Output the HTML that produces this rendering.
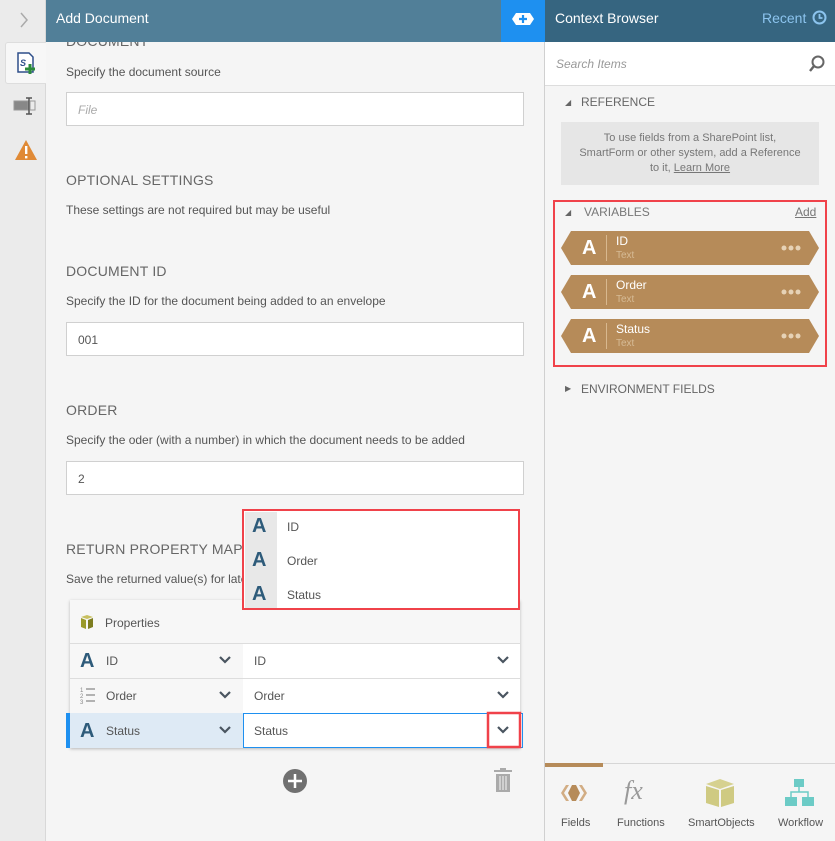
<!DOCTYPE html>
<html><head><style>
*{box-sizing:border-box;margin:0;padding:0}
body{width:835px;height:841px;position:relative;overflow:hidden;font-family:"Liberation Sans",sans-serif;background:#f5f5f5;color:#555}
.a{position:absolute}
.lbl{font-size:14px;color:#666;letter-spacing:.2px}
.desc{font-size:12px;color:#555}
.inp{background:#fff;border:1px solid #d0d0d0;height:34px;font-size:12px;padding:10px 11px;color:#555}
.bigA{font-weight:bold;color:#2e5b7a;font-size:20px}
.var{left:561px;width:258px;height:34px;background:#b68b59;clip-path:polygon(10px 0,248px 0,258px 17px,248px 34px,10px 34px,0 17px)}
</style></head><body>
<div class="a" style="left:0;top:0;width:46px;height:841px;background:#ebebeb;border-right:1px solid #d8d8d8"></div>
<svg class="a" style="left:18px;top:11px" width="12" height="18"><path d="M3 2l6 7-6 7" fill="none" stroke="#aaa" stroke-width="1.5"/></svg>
<div class="a" style="left:5px;top:42px;width:41px;height:42px;background:#f7f7f7;border:1px solid #ddd;border-right:none;border-radius:3px 0 0 3px"></div>
<svg class="a" style="left:15px;top:51px" width="24" height="24"><path d="M3 2h11l4 4v15H3z" fill="#fff" stroke="#2e4f8a" stroke-width="1.5"/><text x="5" y="15" font-size="9" fill="#2e4f8a" font-style="italic" font-weight="bold">S</text><path d="M15 13v10M10 18h10" stroke="#2a8a3a" stroke-width="3"/></svg>
<svg class="a" style="left:13px;top:96px" width="24" height="20"><rect x="1" y="5" width="14" height="9" fill="#888" stroke="#999"/><path d="M16 2v16M13 2h6M13 18h6" stroke="#555" stroke-width="1.5"/><rect x="17" y="5" width="5" height="9" fill="none" stroke="#999"/></svg>
<svg class="a" style="left:14px;top:139px" width="24" height="22"><path d="M12 1L23 21H1z" fill="#e08a36"/><rect x="11" y="7" width="2.4" height="8" fill="#fff"/><rect x="11" y="17" width="2.4" height="2.4" fill="#fff"/></svg>
<div class="a" style="left:46px;top:0;width:455px;height:42px;background:#517f98;color:#fff;font-size:14px;padding:10px 10px">Add Document</div>
<div class="a" style="left:501px;top:0;width:44px;height:42px;background:#1e90f0"></div>
<svg class="a" style="left:511px;top:11px" width="24" height="16"><path d="M5 2h14l4 6-4 6H5L1 8z" fill="#fff"/><path d="M12 4v8M8 8h8" stroke="#1e90f0" stroke-width="2.2"/></svg>
<div class="a" style="left:545px;top:0;width:290px;height:42px;background:#366580;color:#fff;font-size:14px;padding:10px 10px">Context Browser</div>
<div class="a" style="left:762px;top:10px;color:#8cc4ee;font-size:14px">Recent</div>
<svg class="a" style="left:812px;top:10px" width="15" height="15"><circle cx="7.5" cy="7.5" r="6" fill="none" stroke="#8cc4ee" stroke-width="2"/><path d="M7.5 4v4h3" stroke="#8cc4ee" stroke-width="1.8" fill="none"/></svg>
<div class="a lbl" style="left:66px;top:33px;clip-path:inset(9px 0 0 0)">DOCUMENT</div>
<div class="a desc" style="left:66px;top:65px">Specify the document source</div>
<div class="a inp" style="left:66px;top:92px;width:458px;color:#aaa;font-style:italic">File</div>
<div class="a lbl" style="left:66px;top:172px">OPTIONAL SETTINGS</div>
<div class="a desc" style="left:66px;top:203px">These settings are not required but may be useful</div>
<div class="a lbl" style="left:66px;top:263px">DOCUMENT ID</div>
<div class="a desc" style="left:66px;top:294px">Specify the ID for the document being added to an envelope</div>
<div class="a inp" style="left:66px;top:322px;width:458px">001</div>
<div class="a lbl" style="left:66px;top:402px">ORDER</div>
<div class="a desc" style="left:66px;top:433px">Specify the oder (with a number) in which the document needs to be added</div>
<div class="a inp" style="left:66px;top:461px;width:458px">2</div>
<div class="a lbl" style="left:66px;top:541px">RETURN PROPERTY MAPPING</div>
<div class="a desc" style="left:66px;top:572px">Save the returned value(s) for later use</div>
<div class="a" style="left:70px;top:600px;width:450px;height:148px;background:#f7f7f7;box-shadow:0 1px 3px rgba(0,0,0,.25)"></div>
<svg class="a" style="left:80px;top:614px" width="14" height="16"><path d="M1 3l6-2 6 2-6 2z" fill="#c8c060"/><path d="M1 4l5 2v9l-5-2z" fill="#9a9a2a"/><path d="M13 4l-5 2v9l5-2z" fill="#7d7d20"/></svg>
<div class="a desc" style="left:105px;top:616px">Properties</div>
<div class="a" style="left:70px;top:643px;width:450px;height:1px;background:#ddd"></div>
<div class="a" style="left:70px;top:678px;width:450px;height:1px;background:#ddd"></div>
<div class="a" style="left:243px;top:644px;width:277px;height:34px;background:#fff"></div>
<div class="a" style="left:243px;top:679px;width:277px;height:34px;background:#fff"></div>
<div class="a" style="left:66px;top:713px;width:177px;height:35px;background:#deeaf5;border-left:4px solid #1e90f0"></div>
<div class="a" style="left:243px;top:713px;width:280px;height:35px;background:#fff;border:1px solid #1e90f0"></div>
<div class="a bigA" style="left:80px;top:650px">A</div>
<svg class="a" style="left:80px;top:686px" width="16" height="18"><text x="0" y="6" font-size="6" fill="#888">1</text><text x="0" y="12" font-size="6" fill="#888">2</text><text x="0" y="18" font-size="6" fill="#888">3</text><path d="M6 3h9M6 9h9M6 15h9" stroke="#888" stroke-width="1.3"/></svg>
<div class="a bigA" style="left:80px;top:720px">A</div>
<div class="a desc" style="left:106px;top:654px">ID</div>
<div class="a desc" style="left:106px;top:689px">Order</div>
<div class="a desc" style="left:106px;top:724px">Status</div>
<div class="a desc" style="left:254px;top:654px">ID</div>
<div class="a desc" style="left:254px;top:689px">Order</div>
<div class="a desc" style="left:254px;top:724px">Status</div>
<svg class="a" style="left:0;top:0" width="835" height="841"><g fill="none" stroke="#4a5560" stroke-width="2.2"><path d="M220 657l5 5 5-5M220 692l5 5 5-5M220 727l5 5 5-5M498 657l5 5 5-5M498 692l5 5 5-5M498 727l5 5 5-5"/></g>
<rect x="488" y="713" width="32" height="34" fill="none" stroke="#f0424a" stroke-width="2.5"/>
<circle cx="295" cy="781" r="12" fill="#707070"/><path d="M295 774v14M288 781h14" stroke="#fff" stroke-width="2.5"/>
<g fill="#aaa"><rect x="494" y="770" width="18" height="2"/><rect x="500" y="768" width="6" height="2"/><path d="M496 774h14v18h-14z"/></g><path d="M500 776v14M503 776v14M506 776v14" stroke="#f5f5f5" stroke-width="1"/>
</svg>
<div class="a" style="left:242px;top:509px;width:278px;height:101px;background:#fff;border:2.5px solid #f0424a"></div>
<div class="a" style="left:245px;top:512px;width:32px;height:96px;background:#e8e8e8"></div>
<div class="a bigA" style="left:252px;top:515px">A</div>
<div class="a bigA" style="left:252px;top:549px">A</div>
<div class="a bigA" style="left:252px;top:583px">A</div>
<div class="a desc" style="left:287px;top:520px">ID</div>
<div class="a desc" style="left:287px;top:554px">Order</div>
<div class="a desc" style="left:287px;top:588px">Status</div>
<div class="a" style="left:544px;top:42px;width:1px;height:799px;background:#d0d0d0"></div>
<div class="a" style="left:545px;top:42px;width:290px;height:44px;background:#fff;border-bottom:1px solid #ddd"></div>
<div class="a" style="left:556px;top:57px;font-size:12px;font-style:italic;color:#999">Search Items</div>
<svg class="a" style="left:808px;top:55px" width="18" height="18"><circle cx="10" cy="7" r="5.5" fill="none" stroke="#666" stroke-width="2"/><path d="M6 11l-4 5" stroke="#666" stroke-width="2.4"/></svg>
<div class="a" style="left:565px;top:98px;font-size:8px;color:#666">&#9698;</div>
<div class="a" style="left:581px;top:95px;font-size:12px;color:#666">REFERENCE</div>
<div class="a" style="left:561px;top:122px;width:258px;height:63px;background:#e6e6e6;font-size:11px;color:#777;text-align:center;padding:9px 14px;line-height:15px">To use fields from a SharePoint list, SmartForm or other system, add a Reference to it, <u>Learn More</u></div>
<div class="a" style="left:553px;top:200px;width:274px;height:167px;border:2.5px solid #f0424a"></div>
<div class="a" style="left:565px;top:208px;font-size:8px;color:#666">&#9698;</div>
<div class="a" style="left:584px;top:205px;font-size:12px;color:#777">VARIABLES</div>
<div class="a" style="left:795px;top:205px;font-size:12px;color:#777;text-decoration:underline">Add</div>
<div class="a var" style="top:231px"></div>
<div class="a var" style="top:275px"></div>
<div class="a var" style="top:319px"></div>
<div class="a" style="left:0;top:0;width:835px;height:841px;pointer-events:none">
 <div class="a" style="left:582px;top:237px;color:#fff;font-weight:bold;font-size:20px">A</div>
 <div class="a" style="left:582px;top:281px;color:#fff;font-weight:bold;font-size:20px">A</div>
 <div class="a" style="left:582px;top:325px;color:#fff;font-weight:bold;font-size:20px">A</div>
 <div class="a" style="left:606px;top:235px;width:1px;height:26px;background:#d8b88f"></div>
 <div class="a" style="left:606px;top:279px;width:1px;height:26px;background:#d8b88f"></div>
 <div class="a" style="left:606px;top:323px;width:1px;height:26px;background:#d8b88f"></div>
 <div class="a" style="left:616px;top:234px;color:#fff;font-size:12px">ID</div>
 <div class="a" style="left:616px;top:250px;color:#d6bb96;font-size:10px">Text</div>
 <div class="a" style="left:616px;top:278px;color:#fff;font-size:12px">Order</div>
 <div class="a" style="left:616px;top:294px;color:#d6bb96;font-size:10px">Text</div>
 <div class="a" style="left:616px;top:322px;color:#fff;font-size:12px">Status</div>
 <div class="a" style="left:616px;top:338px;color:#d6bb96;font-size:10px">Text</div>
 <svg class="a" style="left:780px;top:244px" width="22" height="100"><g fill="#e6d2b6"><circle cx="4" cy="4" r="2.5"/><circle cx="11" cy="4" r="2.5"/><circle cx="18" cy="4" r="2.5"/><circle cx="4" cy="48" r="2.5"/><circle cx="11" cy="48" r="2.5"/><circle cx="18" cy="48" r="2.5"/><circle cx="4" cy="92" r="2.5"/><circle cx="11" cy="92" r="2.5"/><circle cx="18" cy="92" r="2.5"/></g></svg>
</div>
<div class="a" style="left:565px;top:384px;font-size:8px;color:#666">&#9654;</div>
<div class="a" style="left:581px;top:382px;font-size:12px;color:#666">ENVIRONMENT FIELDS</div>
<div class="a" style="left:545px;top:763px;width:290px;height:1px;background:#d6d6d6"></div>
<div class="a" style="left:545px;top:763px;width:58px;height:4px;background:#b68b59"></div>
<svg class="a" style="left:557px;top:783px" width="34" height="20"><path d="M4 10l5-8h3l-5 8 5 8H9z" fill="#d2ad84"/><path d="M30 10l-5-8h-3l5 8-5 8h3z" fill="#d2ad84"/><path d="M11 10l4-8h4l4 8-4 8h-4z" fill="#b68b59"/></svg>
<div class="a" style="left:624px;top:776px;font-family:'Liberation Serif',serif;font-style:italic;font-size:26px;color:#999">fx</div>
<svg class="a" style="left:704px;top:778px" width="32" height="30"><path d="M2 6l14-5 14 5-14 5z" fill="#d6d190"/><path d="M2 8l13 4v17L2 25z" fill="#cfca82"/><path d="M30 8l-13 4v17l13-4z" fill="#cfca82"/></svg>
<svg class="a" style="left:784px;top:778px" width="32" height="32"><g fill="#6ccbc6"><rect x="10" y="1" width="10" height="8"/><rect x="1" y="19" width="12" height="9"/><rect x="18" y="19" width="12" height="9"/></g><path d="M15 9v5M7 19v-5h17v5" stroke="#6ccbc6" stroke-width="1.5" fill="none"/></svg>
<div class="a" style="left:561px;top:817px;font-size:11px;color:#555">Fields</div>
<div class="a" style="left:617px;top:817px;font-size:11px;color:#555">Functions</div>
<div class="a" style="left:688px;top:817px;font-size:11px;color:#555">SmartObjects</div>
<div class="a" style="left:778px;top:817px;font-size:11px;color:#555">Workflow</div>
</body></html>
